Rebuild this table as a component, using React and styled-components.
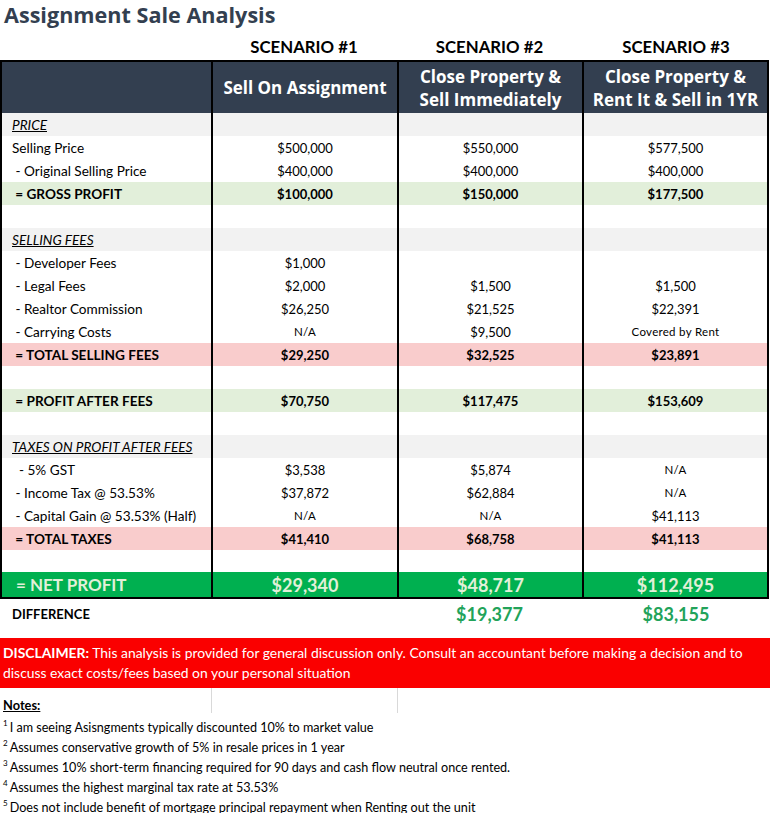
import React from 'react';
import styled, { createGlobalStyle } from 'styled-components';

const GlobalStyle = createGlobalStyle`
  html, body { margin: 0; padding: 0; background: #fff; }
  body { font-family: Lato, "Liberation Sans", sans-serif; color: #000; }
`;

const Page = styled.div`
  width: 770px;
`;

const Title = styled.h1`
  margin: 0;
  height: 30px;
  padding-left: 4px;
  font-family: "Open Sans", sans-serif;
  font-weight: 700;
  font-size: 21.6px;
  line-height: 30px;
  color: #333f50;
`;

const ScenarioRow = styled.div`
  display: grid;
  grid-template-columns: 211px 186px 185px 1fr;
  height: 30px;
`;

const Scenario = styled.div`
  text-align: center;
  font-weight: 700;
  font-size: 16.8px;
  line-height: 24px;
  padding-top: 5px;
`;

const Table = styled.div`
  width: 769px;
  box-sizing: border-box;
  border: 2px solid #000;
`;

const Row = styled.div`
  display: grid;
  grid-template-columns: 209px 186px 185px 1fr;
  height: ${p => p.$h || 23}px;
  background: ${p => p.$bg || '#fff'};
`;

const Cell = styled.div`
  box-sizing: border-box;
  display: flex;
  flex-direction: column;
  align-items: center;
  justify-content: center;
  border-left: 2px solid #000;
  font-size: ${p => (p.$small ? 11.5 : 13)}px;
  font-weight: ${p => (p.$bold ? 700 : 400)};
  letter-spacing: ${p => (p.$small ? '0.3px' : '0')};
`;

const Label = styled.div`
  display: flex;
  align-items: center;
  padding-left: 10px;
  white-space: pre;
  font-size: 13.6px;
  font-weight: ${p => (p.$bold ? 700 : 400)};
  font-style: ${p => (p.$section ? 'italic' : 'normal')};
  text-decoration: ${p => (p.$section ? 'underline' : 'none')};
`;

const HeadCell = styled(Cell)`
  font-family: "Open Sans", sans-serif;
  font-weight: 700;
  font-size: 17px;
  line-height: 23px;
  color: #fff;
`;

const NetLabel = styled(Label)`
  padding-left: 14px;
  font-size: 17px;
  font-weight: 700;
  color: #e2f0d9;
`;

const NetCell = styled(Cell)`
  font-size: 18px;
  font-weight: 700;
  color: #e2f0d9;
`;

const DiffRow = styled.div`
  display: grid;
  grid-template-columns: 211px 186px 185px 1fr;
  height: 29px;
  align-items: center;
`;

const DiffLabel = styled.div`
  padding-left: 12px;
  font-size: 13px;
  font-weight: 700;
`;

const DiffValue = styled.div`
  text-align: center;
  font-size: 18px;
  font-weight: 700;
  color: #22a35a;
`;

const Disclaimer = styled.p`
  margin: 10px 0 0;
  height: 50px;
  box-sizing: border-box;
  padding: 5px 3px;
  background: #fa0000;
  color: #fff;
  font-size: 13.9px;
  line-height: 20px;
  b { font-weight: 700; }
`;

const GridRow = styled.div`
  display: grid;
  grid-template-columns: 211px 186px 185px 1fr;
  height: 25px;
`;

const GridCell = styled.div`
  border-left: ${p => (p.$first ? 'none' : '1px solid #d9d9d9')};
`;

const NotesTitle = styled.div`
  padding: 9px 0 0 3px;
  font-size: 12.8px;
  font-weight: 700;
  text-decoration: underline;
`;

const Notes = styled.div`
  padding-left: 3px;
`;

const Note = styled.div`
  height: 20px;
  line-height: 20px;
  font-size: 12.6px;
  sup { font-size: 8px; margin-right: 2px; vertical-align: 6px; }
`;

const C = {
  gray: '#f2f2f2',
  green: '#e2efda',
  red: '#f9cccc',
  net: '#00b050',
};

const rows = [
  { label: 'PRICE', section: true, bg: C.gray },
  { label: 'Selling Price', v: ['$500,000', '$550,000', '$577,500'] },
  { label: ' - Original Selling Price', v: ['$400,000', '$400,000', '$400,000'] },
  { label: ' = GROSS PROFIT', bold: true, bg: C.green, v: ['$100,000', '$150,000', '$177,500'] },
  {},
  { label: 'SELLING FEES', section: true, bg: C.gray },
  { label: ' - Developer Fees', v: ['$1,000', '', ''] },
  { label: ' - Legal Fees', v: ['$2,000', '$1,500', '$1,500'] },
  { label: ' - Realtor Commission', v: ['$26,250', '$21,525', '$22,391'] },
  { label: ' - Carrying Costs', v: ['N/A', '$9,500', 'Covered by Rent'] },
  { label: ' = TOTAL SELLING FEES', bold: true, bg: C.red, v: ['$29,250', '$32,525', '$23,891'] },
  {},
  { label: ' = PROFIT AFTER FEES', bold: true, bg: C.green, v: ['$70,750', '$117,475', '$153,609'] },
  {},
  { label: 'TAXES ON PROFIT AFTER FEES', section: true, bg: C.gray },
  { label: '  - 5% GST', v: ['$3,538', '$5,874', 'N/A'] },
  { label: ' - Income Tax @ 53.53%', v: ['$37,872', '$62,884', 'N/A'] },
  { label: ' - Capital Gain @ 53.53% (Half)', v: ['N/A', 'N/A', '$41,113'] },
  { label: ' = TOTAL TAXES', bold: true, bg: C.red, v: ['$41,410', '$68,758', '$41,113'] },
  { h: 22 },
];

const notes = [
  'I am seeing Asisngments typically discounted 10% to market value',
  'Assumes conservative growth of 5% in resale prices in 1 year',
  'Assumes 10% short-term financing required for 90 days and cash flow neutral once rented.',
  'Assumes the highest marginal tax rate at 53.53%',
  'Does not include benefit of mortgage principal repayment when Renting out the unit',
];

export default function App() {
  return (
    <Page>
      <GlobalStyle />
      <Title>Assignment Sale Analysis</Title>
      <ScenarioRow>
        <div />
        <Scenario>SCENARIO #1</Scenario>
        <Scenario>SCENARIO #2</Scenario>
        <Scenario>SCENARIO #3</Scenario>
      </ScenarioRow>

      <Table>
        <Row $h={51} $bg="#333f50">
          <div />
          <HeadCell>Sell On Assignment</HeadCell>
          <HeadCell><span>Close Property &amp;</span><span>Sell Immediately</span></HeadCell>
          <HeadCell><span>Close Property &amp;</span><span>Rent It &amp; Sell in 1YR</span></HeadCell>
        </Row>
        {rows.map((r, i) => (
          <Row key={i} $bg={r.bg} $h={r.h}>
            <Label $bold={r.bold} $section={r.section}>{r.label || ''}</Label>
            {[0, 1, 2].map(j => {
              const val = r.v ? r.v[j] : '';
              const small = val === 'N/A' || val === 'Covered by Rent';
              return (
                <Cell key={j} $bold={r.bold} $small={small}>{val}</Cell>
              );
            })}
          </Row>
        ))}
        <Row $h={25} $bg={C.net}>
          <NetLabel>= NET PROFIT</NetLabel>
          <NetCell>$29,340</NetCell>
          <NetCell>$48,717</NetCell>
          <NetCell>$112,495</NetCell>
        </Row>
      </Table>

      <DiffRow>
        <DiffLabel>DIFFERENCE</DiffLabel>
        <div />
        <DiffValue>$19,377</DiffValue>
        <DiffValue>$83,155</DiffValue>
      </DiffRow>

      <Disclaimer>
        <b>DISCLAIMER:</b> This analysis is provided for general discussion only. Consult an accountant before making a decision and to discuss exact costs/fees based on your personal situation
      </Disclaimer>

      <GridRow>
        <GridCell $first><NotesTitle>Notes:</NotesTitle></GridCell>
        <GridCell />
        <GridCell />
        <div />
      </GridRow>
      <Notes>
        {notes.map((n, i) => (
          <Note key={i}><sup>{i + 1}</sup>{n}</Note>
        ))}
      </Notes>
    </Page>
  );
}
